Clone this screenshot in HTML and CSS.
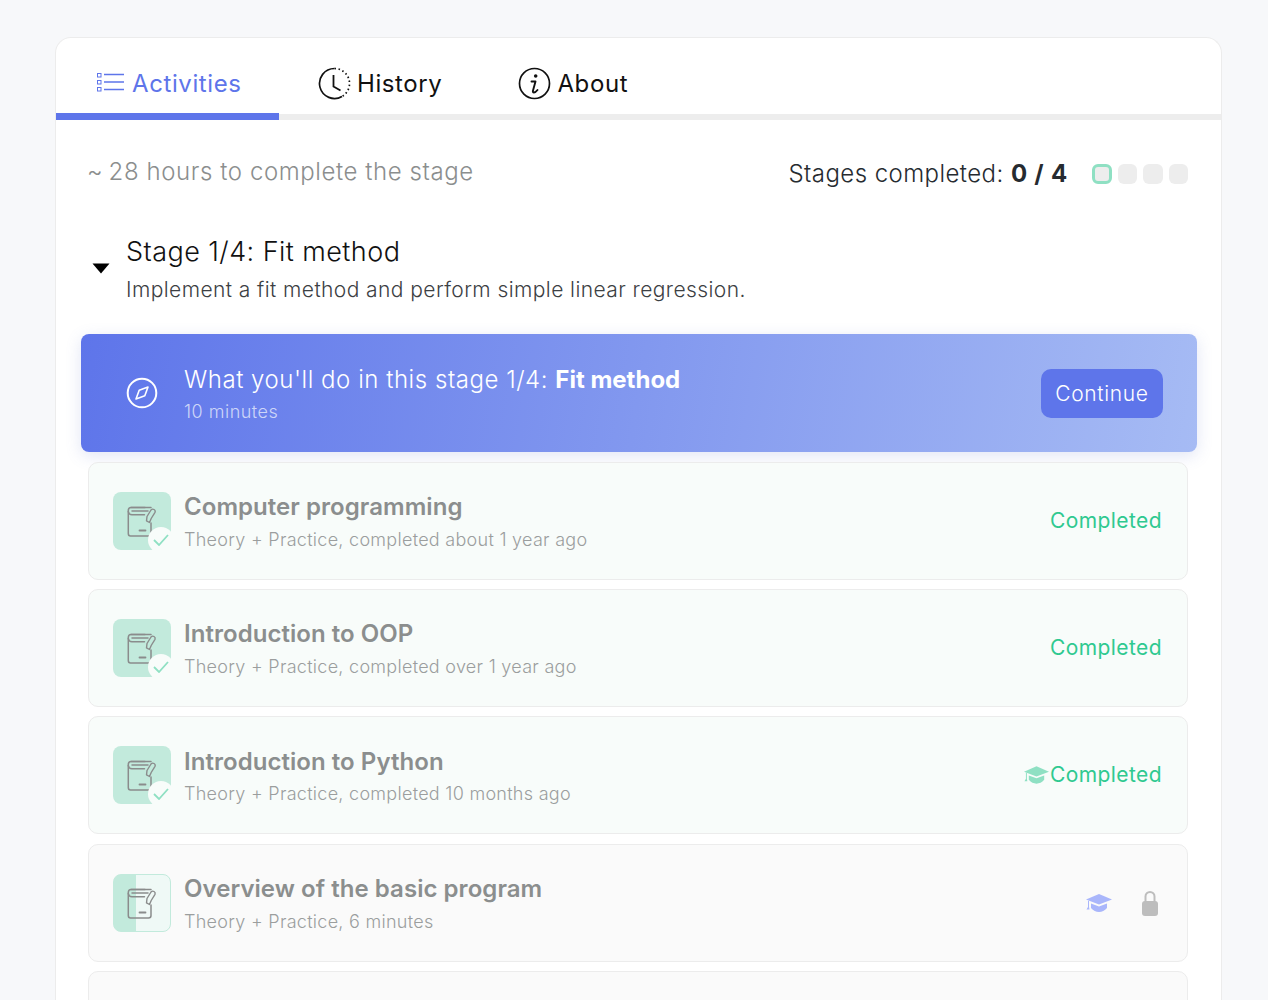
FILE: index.html
```html
<!DOCTYPE html>
<html lang="en">
<head>
<meta charset="utf-8">
<title>Stage 1/4: Fit method</title>
<link rel="stylesheet" href="styles.css">
</head>
<body>
<svg class="defs" width="0" height="0" aria-hidden="true">
  <symbol id="book" viewBox="0 0 32 32">
    <path d="M19 2.500H5Q2.300 2.500 2.300 5.500V28.500Q2.300 31 4.500 31H22.500Q25 31 25 28.500V18" fill="none" stroke="currentColor" stroke-width="1.500" stroke-linecap="round"/>
    <path d="M2.300 6.500Q2.800 9.800 6 9.800H18.500M6 6H22M5 2.500H25" fill="none" stroke="currentColor" stroke-width="1.500" stroke-linecap="round"/>
    <path d="M13.500 25.500H19.500" fill="none" stroke="currentColor" stroke-width="1.800" stroke-linecap="round"/>
    <path d="M23.500 17.500L20.500 15.800L21 11.500L25 5Q26.300 3.500 28 4.500Q29.700 5.500 29 7.300L25.200 13.500Z" fill="none" stroke="currentColor" stroke-width="1.400" stroke-linejoin="round"/>
  </symbol>
  <symbol id="cap" viewBox="0 0 26 18">
    <path d="M13 0L26 5.500L13 10.500L0 5.500Z" fill="currentColor"/>
    <path d="M5 9.500L13 12.500L21 9.500V14Q17.500 18 13 18Q8.500 18 5 14Z" fill="currentColor"/>
    <path d="M2 6.500V13L0.500 15.500H3.500L3 13V7Z" fill="currentColor"/>
  </symbol>
</svg>
<main class="card">
  <nav class="tabs">
    <a class="tab tab-active">
      <svg class="tab-icon-list" width="28" height="22" viewBox="0 0 28 22" fill="none">
        <rect x="1.500" y="2.500" width="3.500" height="3.500" stroke="currentColor"/>
        <rect x="1.500" y="9.500" width="3.500" height="3.500" stroke="currentColor"/>
        <rect x="1.500" y="16.500" width="3.500" height="3.500" stroke="currentColor"/>
        <path d="M8 3.500H28M8 11H28M8 18.500H28" stroke="currentColor" stroke-width="1.600"/>
      </svg>
      <span>Activities</span>
    </a>
    <a class="tab tab-history">
      <svg width="33" height="33" viewBox="0 0 33 33" fill="none">
        <path d="M16.500 1.500A15 15 0 1 0 24 29.500" stroke="#111" stroke-width="1.700"/>
        <path d="M16.500 1.500A15 15 0 0 1 24 29.500" stroke="#111" stroke-width="1.700" stroke-dasharray="1.500 2.600"/>
        <path d="M15.500 8V19.500L22.500 23.500" stroke="#111" stroke-width="1.800"/>
      </svg>
      <span>History</span>
    </a>
    <a class="tab tab-about">
      <svg width="33" height="33" viewBox="0 0 33 33" fill="none">
        <circle cx="16.500" cy="16.500" r="15" stroke="#111" stroke-width="1.700"/>
        <circle cx="17.700" cy="9" r="1.800" fill="#111"/>
        <path d="M13.500 14.500H17.500L15 23.500Q14.500 25.500 16 25.500Q17.500 25.500 19.500 23" stroke="#111" stroke-width="1.900" stroke-linecap="round" stroke-linejoin="round"/>
      </svg>
      <span>About</span>
    </a>
  </nav>

  <div class="summary">
    <div class="hours"><span class="tilde">~</span> 28 hours to complete the stage</div>
    <div class="progress">
      <span class="progress-label">Stages completed: <b>0 / 4</b></span>
      <span class="dots">
        <i class="dot dot-current"></i><i class="dot"></i><i class="dot"></i><i class="dot"></i>
      </span>
    </div>
  </div>

  <header class="stage">
    <svg class="caret" width="18" height="11" viewBox="0 0 18 11"><path d="M0.500 0.500H17.500L9 10.500Z" fill="#000"/></svg>
    <div>
      <h1 class="stage-title">Stage 1/4: Fit method</h1>
      <p class="stage-desc">Implement a fit method and perform simple linear regression.</p>
    </div>
  </header>

  <section class="banner">
    <svg class="compass" width="32" height="32" viewBox="0 0 32 32" fill="none">
      <circle cx="16" cy="16" r="14.300" stroke="#fff" stroke-width="2"/>
      <path d="M22 10L18.800 18.800L10 22L13.200 13.200Z" stroke="#fff" stroke-width="1.600" stroke-linejoin="round"/>
    </svg>
    <div class="banner-text">
      <div class="banner-title">What you'll do in this stage 1/4: <b>Fit method</b></div>
      <div class="banner-sub">10 minutes</div>
    </div>
    <button class="continue">Continue</button>
  </section>

  <ul class="list">
    <li class="row row-done">
      <span class="thumb thumb-full"><svg class="book"><use href="#book"/></svg>
        <span class="check"><svg width="16" height="12" viewBox="0 0 16 12" fill="none"><path d="M1 6L6 11L15 1" stroke="#8fe0c3" stroke-width="1.800"/></svg></span></span>
      <div class="row-text"><div class="row-title">Computer programming</div><div class="row-sub">Theory + Practice, completed about 1 year ago</div></div>
      <div class="row-end"><span class="done">Completed</span></div>
    </li>
    <li class="row row-done">
      <span class="thumb thumb-full"><svg class="book"><use href="#book"/></svg>
        <span class="check"><svg width="16" height="12" viewBox="0 0 16 12" fill="none"><path d="M1 6L6 11L15 1" stroke="#8fe0c3" stroke-width="1.800"/></svg></span></span>
      <div class="row-text"><div class="row-title">Introduction to OOP</div><div class="row-sub">Theory + Practice, completed over 1 year ago</div></div>
      <div class="row-end"><span class="done">Completed</span></div>
    </li>
    <li class="row row-done">
      <span class="thumb thumb-full"><svg class="book"><use href="#book"/></svg>
        <span class="check"><svg width="16" height="12" viewBox="0 0 16 12" fill="none"><path d="M1 6L6 11L15 1" stroke="#8fe0c3" stroke-width="1.800"/></svg></span></span>
      <div class="row-text"><div class="row-title">Introduction to Python</div><div class="row-sub">Theory + Practice, completed 10 months ago</div></div>
      <div class="row-end"><svg class="cap cap-green"><use href="#cap"/></svg><span class="done">Completed</span></div>
    </li>
    <li class="row row-locked">
      <span class="thumb thumb-part"><svg class="book"><use href="#book"/></svg></span>
      <div class="row-text"><div class="row-title">Overview of the basic program</div><div class="row-sub">Theory + Practice, 6 minutes</div></div>
      <div class="row-end row-end-locked">
        <svg class="cap cap-blue"><use href="#cap"/></svg>
        <svg class="lock" width="16" height="26" viewBox="0 0 16 26" fill="none">
          <path d="M3.500 12V6.500A4.500 4.500 0 0 1 12.500 6.500V12" stroke="#bdbdbd" stroke-width="2"/>
          <rect y="11" width="16" height="15" rx="3" fill="#bdbdbd"/>
        </svg>
      </div>
    </li>
    <li class="row row-locked"></li>
  </ul>
</main>
</body>
</html>
```
FILE: styles.css
```css
* { box-sizing: border-box; }
html, body { height: 1000px; overflow: hidden; }
body {
  margin: 0;
  background: #f7f8fa;
  font-family: Inter, "Noto Sans", sans-serif;
  font-weight: 350;
  color: #262b30;
}
.defs { position: absolute; }
.card {
  width: 1167px;
  margin: 37px 0 0 55px;
  height: 963px;
  overflow: hidden;
  background: #fff;
  border: 1px solid #ececec;
  border-bottom: 0;
  border-radius: 16px 16px 0 0;
}
.tabs {
  display: flex;
  align-items: flex-start;
  height: 82px;
  border-bottom: 6px solid #ededed;
}
.tab {
  display: flex;
  align-items: center;
  height: 76px;
  padding-top: 15px;
  font-size: 24px;
  font-weight: 400;
  letter-spacing: 0.6px;
  color: #111;
}
.tab-active {
  width: 223px;
  height: 82px;
  padding-left: 40px;
  gap: 8px;
  color: #5e75ea;
  border-bottom: 7px solid #5e75ea;
}
.tab-icon-list { color: #5e75ea; flex: none; margin-top: -2px; }
.tab-history { margin-left: 39px; gap: 6px; }
.tab-about { margin-left: 76px; gap: 6px; }

.summary {
  display: flex;
  justify-content: space-between;
  padding: 37px 33px 0 31px;
  height: 76px;
}
.hours {
  font-size: 24px;
  line-height: 30px;
  color: #8b8e8e;
  letter-spacing: 0.58px;
}
.tilde { margin-right: -2px; }
.progress { display: flex; align-items: flex-start; padding-top: 1px; }
.progress-label {
  font-size: 24px;
  line-height: 32px;
  letter-spacing: 0.44px;
  color: #262b30;
}
.progress-label b { font-weight: 700; letter-spacing: 0.8px; }
.dots { display: flex; gap: 6px; margin-left: 24px; margin-top: 6px; }
.dot {
  display: block;
  width: 19.500px;
  height: 20px;
  border-radius: 6px;
  background: #ededed;
}
.dot-current { border: 3px solid #8fe0c3; }

.stage {
  display: flex;
  align-items: center;
  gap: 16px;
  padding-left: 36px;
  margin-top: 38px;
}
.caret { flex: none; margin-top: -4px; }
.stage-title {
  margin: 0;
  font-size: 27px;
  line-height: 36px;
  font-weight: 350;
  color: #111;
  letter-spacing: 0.44px;
}
.stage-desc {
  margin: 4px 0 0;
  font-size: 21px;
  line-height: 32px;
  color: #3c4043;
  letter-spacing: 0.42px;
}

.banner {
  display: flex;
  align-items: center;
  width: 1116px;
  height: 118px;
  margin: 28px 0 0 25px;
  padding: 0 34px 0 45px;
  border-radius: 8px;
  background: linear-gradient(100deg, #5e75ea 0%, #a6bbf4 100%);
  box-shadow: 0 4px 16px rgba(90, 110, 200, 0.18);
  color: #fff;
}
.compass { flex: none; }
.banner-text { margin-left: 26px; flex: 1; padding-top: 2px; }
.banner-title {
  font-size: 24px;
  line-height: 32px;
  letter-spacing: 0.54px;
}
.banner-title b { font-weight: 700; letter-spacing: 0; }
.banner-sub {
  margin-top: 4px;
  font-size: 18px;
  line-height: 24px;
  letter-spacing: 0.5px;
  color: #cdd6f8;
}
.continue {
  width: 122px;
  height: 49px;
  border: 0;
  border-radius: 10px;
  background: #5e75ea;
  color: #fff;
  font-family: inherit;
  font-weight: 350;
  font-size: 21px;
  letter-spacing: 0.65px;
}

.list {
  list-style: none;
  margin: 10px 0 0 32px;
  padding: 0;
  width: 1100px;
  display: flex;
  flex-direction: column;
  gap: 9.200px;
}
.row {
  display: flex;
  align-items: center;
  height: 118px;
  flex: none;
  padding: 0 25px 0 24px;
  border: 1px solid #ececec;
  border-radius: 10px;
}
.row-done { background: #f8fcfa; }
.row-locked { background: #fafafa; }
.thumb {
  position: relative;
  flex: none;
  display: flex;
  align-items: center;
  justify-content: center;
  width: 58px;
  height: 58px;
  border-radius: 8px;
  color: #8a8c8c;
}
.thumb-full { background: #c2eadc; }
.thumb-part {
  background: linear-gradient(90deg, #c2eadc 40%, #eff9f6 40%);
  border: 1px solid #c2eadc;
}
.book { width: 32px; height: 32px; }
.check {
  position: absolute;
  right: -3px;
  bottom: -3px;
  display: flex;
  align-items: center;
  justify-content: center;
  width: 26px;
  height: 26px;
  border-radius: 50%;
  background: #f8fcfa;
}
.row-text { flex: 1; margin-left: 13px; margin-top: 1.200px; }
.row-title {
  font-size: 24px;
  line-height: 32px;
  font-weight: 600;
  color: #8b8e8e;
  letter-spacing: 0.05px;
}
.row-sub {
  margin-top: 4.800px;
  font-size: 18px;
  line-height: 24px;
  color: #9b9e9e;
  letter-spacing: 0.28px;
}
.row-end { display: flex; align-items: center; margin-top: -1px; }
.done {
  font-size: 21px;
  font-weight: 400;
  letter-spacing: 0.42px;
  color: #2fc990;
}
.cap { width: 25px; height: 18px; }
.cap-green { color: #8fe0c3; margin-right: 1px; }
.cap-blue { color: #a9b6fb; width: 26px; }
.row-end-locked { gap: 30px; padding-right: 4px; margin-top: 0; }
```
